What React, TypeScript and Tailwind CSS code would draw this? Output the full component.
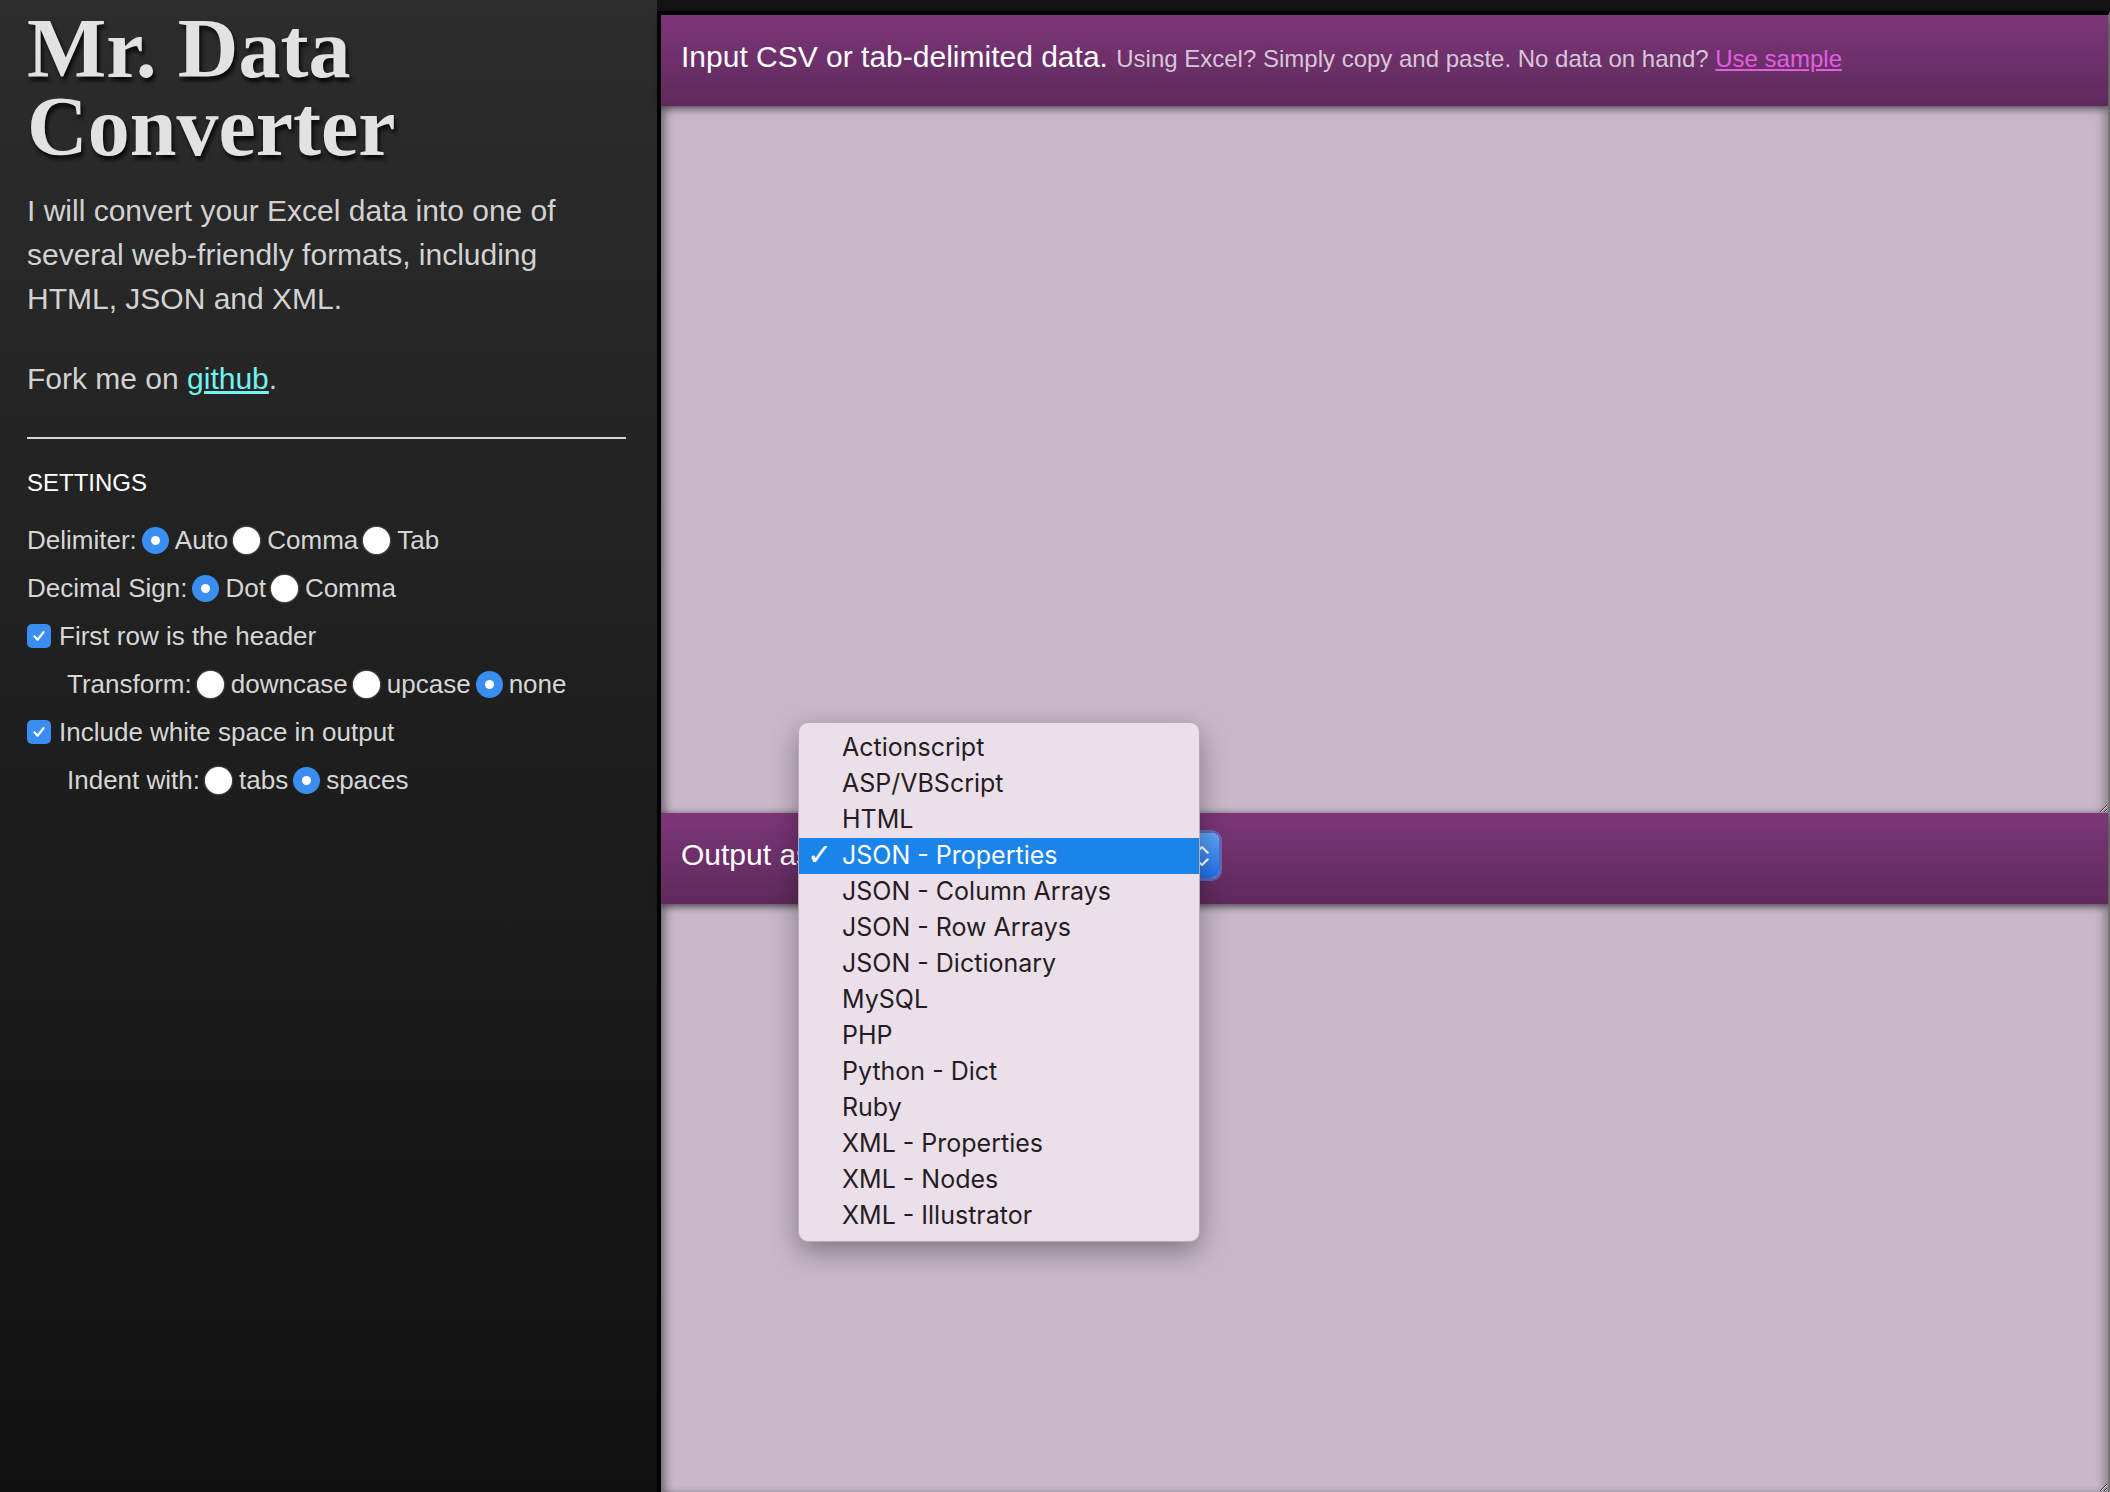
const formats = [
  'Actionscript',
  'ASP/VBScript',
  'HTML',
  'JSON - Properties',
  'JSON - Column Arrays',
  'JSON - Row Arrays',
  'JSON - Dictionary',
  'MySQL',
  'PHP',
  'Python - Dict',
  'Ruby',
  'XML - Properties',
  'XML - Nodes',
  'XML - Illustrator',
]

function Radio({ checked }: { checked?: boolean }) {
  if (checked) {
    return (
      <span className="ml-[5px] mr-[6px] flex h-[27px] w-[27px] shrink-0 items-center justify-center rounded-full bg-[#3a8ef2]">
        <span className="h-[9px] w-[9px] rounded-full bg-white" />
      </span>
    )
  }
  return <span className="ml-[5px] mr-[7px] h-[27px] w-[27px] shrink-0 rounded-full bg-white shadow-[0_0_2px_rgba(255,255,255,0.7)]" />
}

function Checkbox() {
  return (
    <span className="mr-[8px] flex h-[24px] w-[24px] shrink-0 items-center justify-center rounded-[5px] bg-[#3a8ef2]">
      <svg viewBox="0 0 24 24" className="h-[18px] w-[18px]" fill="none" stroke="white" strokeWidth={3} strokeLinecap="round" strokeLinejoin="round">
        <path d="M6 12.5l4 4.5 8-10" />
      </svg>
    </span>
  )
}

function Sidebar() {
  return (
    <aside className="min-h-[1492px] w-[657px] shrink-0 bg-gradient-to-b from-[#2d2d2d] via-[#1e1e1e] to-[#111111] pl-[27px] pr-[31px] pt-[10px]">
      <h1 className="font-['Liberation_Serif',serif] text-[84px] font-bold leading-[78px] text-[#e2e2e2] [text-shadow:2px_4px_4px_rgba(0,0,0,0.85)]">
        <div className="h-[78px]">Mr. Data</div>
        <div className="h-[78px]">Converter</div>
      </h1>
      <p className="mt-[23px] text-[30px] leading-[44px] text-[#d2d2d2]">
        I will convert your Excel data into one of
        <br />
        several web-friendly formats, including
        <br />
        HTML, JSON and XML.
      </p>
      <p className="mt-[36px] text-[30px] leading-[44px] text-[#d2d2d2]">
        Fork me on <a className="text-[#72f2f2] underline">github</a>.
      </p>
      <div className="mt-[36px] h-[2px] bg-[#d6d6d6]" />

      <h2 className="mt-[20px] text-[24px] leading-[48px] text-white">SETTINGS</h2>
      <div className="mt-[9px] text-[26px] leading-[48px] text-[#d6d6d6]">
        <div className="flex h-[48px] items-center">
          Delimiter:
          <Radio checked />
          Auto
          <Radio />
          Comma
          <Radio />
          Tab
        </div>
        <div className="flex h-[48px] items-center">
          Decimal Sign:
          <Radio checked />
          Dot
          <Radio />
          Comma
        </div>
        <div className="flex h-[48px] items-center">
          <Checkbox />
          First row is the header
        </div>
        <div className="flex h-[48px] items-center pl-[40px]">
          Transform:
          <Radio />
          downcase
          <Radio />
          upcase
          <Radio checked />
          none
        </div>
        <div className="flex h-[48px] items-center">
          <Checkbox />
          Include white space in output
        </div>
        <div className="flex h-[48px] items-center pl-[40px]">
          Indent with:
          <Radio />
          tabs
          <Radio checked />
          spaces
        </div>
      </div>
    </aside>
  )
}

function FormatMenu() {
  return (
    <div className="absolute left-[137px] top-[-91px] z-30 w-[402px] rounded-[10px] border border-[#b9aab6] bg-[#ebe0e9] py-[7px] font-['Inter',sans-serif] text-[25px] shadow-[0_10px_28px_rgba(0,0,0,0.35)]">
      {formats.map((f) => {
        const selected = f === 'JSON - Properties'
        return (
          <div
            key={f}
            className={`relative flex h-[36px] items-center pl-[43px] ${selected ? 'bg-[#1b84ea] text-white' : 'text-[#251d23]'}`}
          >
            {selected && <span className="absolute left-[8px] top-[-1px] font-['DejaVu_Sans',sans-serif] text-[30px] font-bold leading-[36px]">✓</span>}
            {f}
          </div>
        )
      })}
    </div>
  )
}

const headerBg = 'bg-gradient-to-b from-[#7d3679] to-[#5d2a5b]'
const areaShadow = 'shadow-[inset_8px_0_10px_-4px_rgba(0,0,0,0.45),inset_-8px_0_10px_-4px_rgba(0,0,0,0.3)]'

export default function App() {
  return (
    <div className="flex w-full bg-[#131313] font-['Liberation_Sans',Arial,sans-serif]">
      <Sidebar />
      <main className="flex-1 pt-[11px]">
        <div className="border-l-4 border-t-4 border-r-2 border-black border-r-[#7b7b7b]">
          <div className={`relative z-10 h-[91px] ${headerBg} pl-[20px] pt-[24px] leading-[36px] shadow-[0_3px_8px_rgba(0,0,0,0.5)]`}>
            <span className="text-[30px] text-white">Input CSV or tab-delimited data. </span>
            <span className="text-[24px] text-[#d8c6d8]">
              Using Excel? Simply copy and paste. No data on hand? <a className="text-[#e25ee0] underline">Use sample</a>
            </span>
          </div>
          <textarea className={`block h-[707px] w-full bg-[#c9b8c9] ${areaShadow} outline-none`} />

          <div className={`relative z-20 flex h-[91px] items-start ${headerBg} pl-[20px] pt-[24px] shadow-[0_3px_8px_rgba(0,0,0,0.5)]`}>
            <span className="text-[30px] leading-[36px] text-white">Output as</span>
            <div className="relative ml-[8px] mt-[-4px] h-[45px] w-[400px] rounded-[8px] bg-white shadow-[0_0_0_3px_rgba(90,150,240,0.55)]">
              <div className="absolute right-0 top-0 flex h-full w-[34px] items-center justify-center rounded-r-[8px] bg-gradient-to-b from-[#5ea5f7] to-[#1c6fe6]">
                <svg viewBox="0 0 16 24" className="h-[28px] w-[18px]" fill="none" stroke="white" strokeWidth={2} strokeLinecap="round" strokeLinejoin="round">
                  <path d="M3 9l5-5 5 5" />
                  <path d="M3 15l5 5 5-5" />
                </svg>
              </div>
            </div>
            <FormatMenu />
          </div>
          <textarea className={`block h-[588px] w-full bg-[#c9b8c9] ${areaShadow} outline-none`} />
        </div>
      </main>
    </div>
  )
}
